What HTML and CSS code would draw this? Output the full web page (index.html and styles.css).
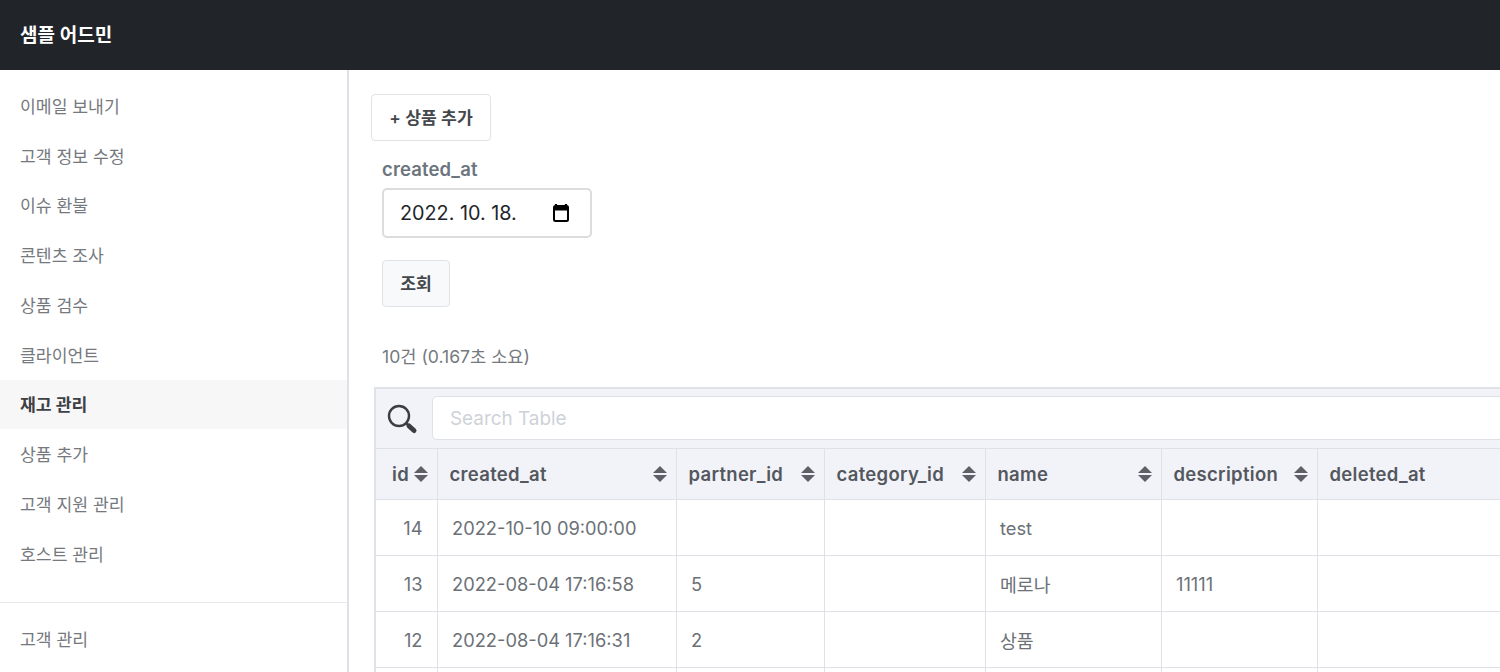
FILE: index.html
```html
<!DOCTYPE html>
<html lang="ko">
<head>
<meta charset="utf-8">
<title>샘플 어드민</title>
<link rel="stylesheet" href="styles.css">
</head>
<body>
<header class="topbar">샘플 어드민</header>
<div class="layout">
  <nav class="sidebar">
    <ul class="menu">
      <li class="menu-item">이메일 보내기</li>
      <li class="menu-item">고객 정보 수정</li>
      <li class="menu-item">이슈 환불</li>
      <li class="menu-item">콘텐츠 조사</li>
      <li class="menu-item">상품 검수</li>
      <li class="menu-item">클라이언트</li>
      <li class="menu-item active">재고 관리</li>
      <li class="menu-item">상품 추가</li>
      <li class="menu-item">고객 지원 관리</li>
      <li class="menu-item">호스트 관리</li>
    </ul>
    <hr class="menu-divider">
    <ul class="menu menu-second">
      <li class="menu-item">고객 관리</li>
    </ul>
  </nav>
  <main class="content">
    <button class="btn btn-add">+ 상품 추가</button>
    <form class="filter">
      <label class="filter-label">created_at</label>
      <div class="date-input">
        <span>2022. 10. 18.</span>
        <svg class="cal-icon" width="18" height="20" viewBox="0 0 18 20"><path d="M4 1v2M14 1v2" stroke="#000" stroke-width="2.2" fill="none"/><rect x="2" y="3" width="14" height="15" rx="1.5" fill="none" stroke="#000" stroke-width="2"/><rect x="2" y="3" width="14" height="4.5" fill="#000"/></svg>
      </div>
      <button type="button" class="btn btn-query">조회</button>
    </form>
    <p class="summary">10건 (0.167초 소요)</p>
    <div class="table-box">
      <div class="search-bar">
        <svg class="search-icon" width="32" height="32" viewBox="0 0 32 32"><circle cx="13" cy="13" r="10" fill="none" stroke="#3a3d42" stroke-width="2.4"/><path d="M20.5 20.5l2 2" stroke="#3a3d42" stroke-width="2.4"/><path d="M23 23l5 4.5" stroke="#3a3d42" stroke-width="5" stroke-linecap="round"/></svg>
        <div class="search-input">Search Table</div>
      </div>
      <table class="grid">
        <colgroup>
          <col class="c1"><col class="c2"><col class="c3"><col class="c4"><col class="c5"><col class="c6"><col class="c7">
        </colgroup>
        <thead>
          <tr>
            <th class="th-id"><div class="th-in">id<i class="sort"></i></div></th>
            <th><div class="th-in">created_at<i class="sort"></i></div></th>
            <th><div class="th-in">partner_id<i class="sort"></i></div></th>
            <th><div class="th-in">category_id<i class="sort"></i></div></th>
            <th><div class="th-in">name<i class="sort"></i></div></th>
            <th><div class="th-in">description<i class="sort"></i></div></th>
            <th><div class="th-in">deleted_at</div></th>
          </tr>
        </thead>
        <tbody>
          <tr><td class="num">14</td><td>2022-10-10 09:00:00</td><td></td><td></td><td>test</td><td></td><td></td></tr>
          <tr><td class="num">13</td><td>2022-08-04 17:16:58</td><td>5</td><td></td><td>메로나</td><td>11111</td><td></td></tr>
          <tr><td class="num">12</td><td>2022-08-04 17:16:31</td><td>2</td><td></td><td>상품</td><td></td><td></td></tr>
          <tr><td class="num"></td><td></td><td></td><td></td><td></td><td></td><td></td></tr>
        </tbody>
      </table>
    </div>
  </main>
</div>
</body>
</html>
```

FILE: styles.css
```css
* { box-sizing: border-box; }
html, body { margin: 0; height: 100%; overflow: hidden; }
body {
  font-family: Inter, "Noto Sans CJK KR", sans-serif;
  font-size: 17.2px;
  color: #6c757d;
  background: #fff;
  display: flex;
  flex-direction: column;
}
.topbar {
  height: 70px;
  flex: none;
  background: #212529;
  color: #fff;
  font-size: 19px;
  font-weight: 600;
  display: flex;
  align-items: center;
  padding: 0 0 4px 20px;
}
.layout { flex: 1; display: flex; min-height: 0; }
.sidebar {
  width: 349px;
  flex: none;
  border-right: 2px solid #e0e1e6;
  padding-top: 11px;
}
.menu { list-style: none; margin: 0; padding: 0; }
.menu-item {
  height: 49.75px;
  display: flex;
  align-items: center;
  padding: 0 0 1px 20px;
  color: #75797e;
}
.menu-item.active { background: #f7f7f7; color: #3d4045; font-weight: 700; }
.menu-divider { border: 0; border-top: 1px solid #e6e8eb; margin: 23px 0 12px; }
.content {
  flex: 1;
  min-width: 0;
  padding: 24px 0 0 22px;
  overflow: hidden;
}
.btn {
  display: block;
  font: inherit;
  font-weight: 600;
  color: #44484d;
  height: 47px;
  padding: 0 0 2px;
  border: 1px solid #e0e2e6;
  border-radius: 4px;
  background: #fff;
}
.btn-add { width: 120px; }
.filter { margin: 17px 0 0 11px; display: block; }
.filter-label { display: block; font-weight: 600; color: #6c757d; line-height: 22px; font-size: 18.5px; letter-spacing: .12px; }
.date-input {
  margin-top: 8px;
  width: 210px;
  height: 50px;
  border: 2px solid #dcdcdc;
  border-radius: 5px;
  display: flex;
  align-items: center;
  justify-content: space-between;
  padding: 0 20px 0 16px;
  font-size: 19.8px;
  color: #212529;
}
.cal-icon { display: block; }
.btn-query { margin-top: 22px; width: 68px; background: #f8f9fa; }
.summary { margin: 39px 0 0 11px; line-height: 22px; color: #75797e; font-size: 17.6px; }
.table-box {
  margin-top: 19px;
  margin-left: 3px;
  width: 1400px;
  border: 2px solid #e0e2e8;
  border-right: 0;
  border-bottom: 0;
  background: #f1f3f8;
}
.search-bar {
  height: 60px;
  display: flex;
  align-items: center;
  padding-left: 10px;
  border-bottom: 1px solid #dee2e6;
  gap: 14px;
}
.search-icon { flex: none; margin-top: 1px; }
.search-input {
  flex: 1;
  height: 44px;
  background: #fff;
  border: 1px solid #dee2e6;
  border-radius: 5px;
  display: flex;
  align-items: center;
  padding: 1px 0 0 17px;
  margin-bottom: 1px;
  color: #ced2d8;
  font-size: 18.9px;
}
.grid { border-collapse: collapse; table-layout: fixed; width: 1200px; background: #fff; }
.c1 { width: 61px; } .c2 { width: 239px; } .c3 { width: 148px; } .c4 { width: 161px; }
.c5 { width: 176px; } .c6 { width: 156px; } .c7 { width: 259px; }
.grid th {
  height: 50px;
  background: #f1f3f8;
  border: 1px solid #dee2e6;
  border-top: 0;
  border-left: 0;
  padding: 0 9px 0 12px;
  font-weight: 600;
  color: #54585e;
  text-align: left;
  font-size: 18.5px;
  letter-spacing: .3px;
}
.grid th.th-id { padding: 0 9px 0 16px; }
.th-in { display: flex; align-items: center; justify-content: space-between; }
.sort { flex: none; width: 14px; height: 16px; position: relative; display: block; }
.sort::before, .sort::after {
  content: "";
  position: absolute;
  left: 0;
  border-left: 7px solid transparent;
  border-right: 7px solid transparent;
}
.sort::before { top: 0; border-bottom: 7px solid #5d6167; }
.sort::after { bottom: 0; border-top: 7px solid #5d6167; }
.grid td {
  height: 56px;
  border: 1px solid #dee2e6;
  border-top: 0;
  border-left: 0;
  padding: 2px 14px 0 14.5px;
  color: #6c7177;
  font-size: 18.3px;
}
.grid td.num { text-align: right; padding: 2px 14px 0 0; }
```
